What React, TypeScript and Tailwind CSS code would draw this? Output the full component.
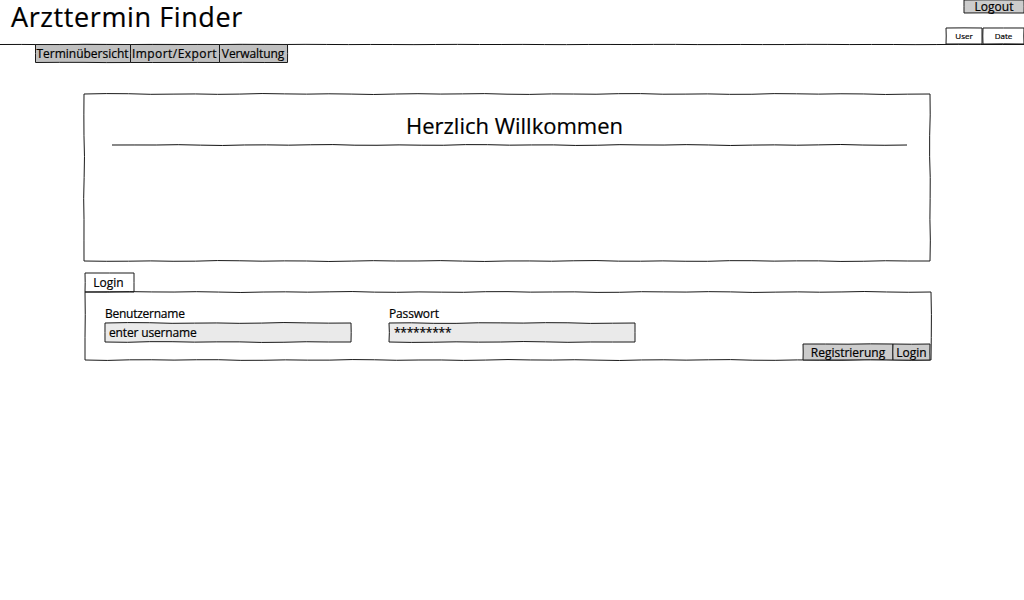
import type { ReactNode } from "react";

type Point = [number, number];

/** Points of a slightly wavering pen stroke between two corners. */
function stroke(x1: number, y1: number, x2: number, y2: number, seed: number, wobble = 1): Point[] {
  const length = Math.hypot(x2 - x1, y2 - y1);
  const steps = Math.max(2, Math.round(length / 22));
  const nx = -(y2 - y1) / length;
  const ny = (x2 - x1) / length;
  const points: Point[] = [];
  for (let i = 0; i <= steps; i++) {
    const t = i / steps;
    const edge = i === 0 || i === steps ? 0 : wobble;
    const offset = edge * (Math.sin(i * 1.9 + seed) * 0.3 + Math.sin(i * 0.8 + seed * 2) * 0.2);
    points.push([x1 + (x2 - x1) * t + nx * offset, y1 + (y2 - y1) * t + ny * offset]);
  }
  return points;
}

function toPath(points: Point[]) {
  return points.map(([x, y], i) => `${i ? "L" : "M"}${x.toFixed(2)} ${y.toFixed(2)}`).join("");
}

interface LineProps {
  width: number;
  seed?: number;
  wobble?: number;
  shift?: number;
}

function Line({ width, seed = 1, wobble = 1, shift = 0 }: LineProps) {
  return (
    <svg className="block h-px overflow-visible" width={width} height={1} aria-hidden="true">
      <path d={toPath(stroke(0, shift, width, shift, seed, wobble))} fill="none" stroke="#111" />
    </svg>
  );
}

interface BoxProps {
  width: number;
  height: number;
  fill?: string;
  seed?: number;
  wobble?: number;
  shift?: number;
  children?: ReactNode;
}

function Box({ width, height, fill = "none", seed = 1, wobble = 1, shift = 0, children }: BoxProps) {
  const a = shift;
  const right = width + shift;
  const bottom = height + shift;
  const outline = [
    ...stroke(a, a, right, a, seed, wobble),
    ...stroke(right, a, right, bottom, seed + 1, wobble),
    ...stroke(right, bottom, a, bottom, seed + 2, wobble),
    ...stroke(a, bottom, a, a, seed + 3, wobble),
  ];
  return (
    <div className="relative shrink-0" style={{ width, height }}>
      <svg
        className="pointer-events-none absolute inset-0 overflow-visible"
        width={width}
        height={height}
        aria-hidden="true"
      >
        <path d={`${toPath(outline)}Z`} fill={fill} stroke="#1a1a1a" />
      </svg>
      {children}
    </div>
  );
}

const center = "relative flex h-full w-full items-center justify-center whitespace-nowrap";

export default function App() {
  return (
    <div className="h-[600px] w-[1024px] overflow-hidden bg-white font-['Comic_Sans_MS','Open_Sans',sans-serif] text-[12px] leading-none text-black [-webkit-text-stroke:0.2px_black]">
      <header className="flex h-11 justify-between">
        <h1 className="pt-[2px] pl-[11px] text-[27px] leading-[30px] tracking-[0.6px] whitespace-nowrap">
          Arzttermin Finder
        </h1>
        <div className="flex flex-col items-end justify-between">
          <Box width={60} height={13} fill="#ccc" seed={2} wobble={0.4}>
            <button className={center}>Logout</button>
          </Box>
          <div className="flex gap-px">
            <Box width={36} height={16} seed={3} wobble={0.6}>
              <span className={`${center} text-[8px]`}>User</span>
            </Box>
            <Box width={41} height={16} seed={5} wobble={0.6}>
              <span className={`${center} text-[8px]`}>Date</span>
            </Box>
          </div>
        </div>
      </header>
      <Line width={1024} seed={3} wobble={0.3} shift={0.5} />
      <nav className="-mt-px flex pl-[35px]">
        <Box width={95} height={18} fill="#c0c0c0" seed={1} wobble={0.4} shift={0.5}>
          <button className={`${center} pt-px`}>Terminübersicht</button>
        </Box>
        <Box width={89} height={18} fill="#c0c0c0" seed={4} wobble={0.2} shift={0.5}>
          <button className={`${center} pt-px tracking-[0.45px]`}>Import/Export</button>
        </Box>
        <Box width={68} height={18} fill="#c0c0c0" seed={2} wobble={0.4} shift={0.5}>
          <button className={`${center} pt-px tracking-[-0.1px]`}>Verwaltung</button>
        </Box>
      </nav>

      <main className="pt-8 pl-[84px]">
        <Box width={846} height={167} seed={2}>
          <div className="flex flex-col items-center pt-4">
            <h2 className="h-[35px] pl-[15px] text-[22px] leading-[30px] whitespace-nowrap">
              Herzlich Willkommen
            </h2>
            <div className="self-start pl-[28px]">
              <Line width={795} seed={5} />
            </div>
          </div>
        </Box>

        <section className="pt-3 pl-px">
          <Box width={49} height={19} seed={4} wobble={0.6}>
            <span className={`${center} pr-[2px] pt-px`}>Login</span>
          </Box>
          <Box width={846} height={68} seed={1}>
            <form className="flex h-full" onSubmit={(e) => e.preventDefault()}>
              <label className="block w-[284px] pt-[15px] pl-5">
                <span className="block h-4 leading-[13px] tracking-[-0.25px]">Benutzername</span>
                <Box width={246} height={19} fill="#eaeaea" seed={2}>
                  <input
                    className="relative block h-full w-full bg-transparent pl-1 tracking-[-0.15px] outline-none"
                    defaultValue="enter username"
                  />
                </Box>
              </label>
              <label className="block w-[434px] pt-[15px] pl-5">
                <span className="block h-4 leading-[13px] tracking-[-0.15px]">Passwort</span>
                <Box width={246} height={19} fill="#eaeaea" seed={3}>
                  <input
                    className="relative block h-full w-full bg-transparent pl-[5px] tracking-[-0.25px] outline-none"
                    defaultValue="*********"
                  />
                </Box>
              </label>
              <div className="flex items-end">
                <Box width={90} height={16} fill="#ccc" seed={4} wobble={0.6}>
                  <button className={`${center} pt-[2px]`}>Registrierung</button>
                </Box>
                <Box width={37} height={16} fill="#ccc" seed={6} wobble={0.6}>
                  <button className={`${center} pt-[2px]`}>Login</button>
                </Box>
              </div>
            </form>
          </Box>
        </section>
      </main>
    </div>
  );
}
